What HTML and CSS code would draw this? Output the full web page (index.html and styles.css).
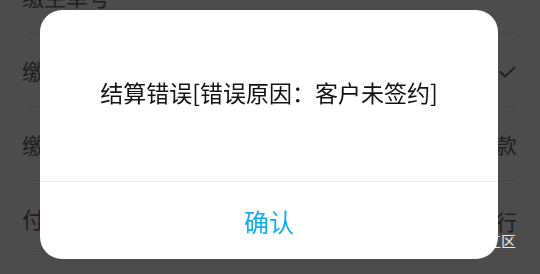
FILE: index.html
```html
<!DOCTYPE html>
<html lang="zh-CN">
<head>
<meta charset="utf-8">
<title>结算错误</title>
<link rel="stylesheet" href="styles.css">
</head>
<body>
<div class="page">
  <div class="list">
    <div class="row"><span class="label">缴主单号</span><span class="value"></span></div>
    <div class="row"><span class="label">缴费类型</span>
      <svg class="check" width="17" height="12" viewBox="0 0 17 12"><path d="M1 5.5 L6 10.5 L16 1" fill="none" stroke="#202020" stroke-width="1.8"/></svg>
    </div>
    <div class="row"><span class="label">缴款方式</span><span class="value">对公汇款</span></div>
    <div class="row"><span class="label">付款银行</span>
      <div class="value-col"><span class="value">中国银行</span><span class="sub">上海市松江区</span></div>
    </div>
    <div class="row"><span class="label"></span></div>
  </div>
</div>
<div class="overlay">
  <div class="dialog">
    <div class="message">结算错误[错误原因：客户未签约]</div>
    <div class="actions"><span class="confirm">确认</span></div>
  </div>
</div>
</body>
</html>
```
FILE: styles.css
```css
html, body {
  margin: 0;
  padding: 0;
  width: 540px;
  height: 274px;
  overflow: hidden;
  background: #4c4c4c;
  font-family: "Noto Sans CJK SC", "Noto Sans", sans-serif;
}
.page {
  height: 274px;
  overflow: hidden;
}
.list {
  margin-top: -41px;
}
.row {
  height: 73px;
  margin: 0 25px 0 27px;
  border-bottom: 1px solid #464646;
  display: flex;
  justify-content: space-between;
  align-items: center;
}
.label {
  margin-left: -5px;
  font-size: 22px;
  line-height: 22px;
  color: #1f1f1f;
}
.value {
  margin-right: -2px;
  font-size: 21px;
  line-height: 22px;
  color: #1f1f1f;
}
.check {
  margin-right: -1px;
  margin-top: 4px;
}
.value-col {
  align-self: flex-start;
  padding-top: 29px;
  display: flex;
  flex-direction: column;
  align-items: flex-end;
}
.sub {
  margin-right: -1px;
  font-size: 15px;
  line-height: 17px;
  color: #e8e8e8;
}
.overlay {
  position: fixed;
  inset: 0;
  padding: 10px 0 0 40px;
  display: flex;
  align-items: flex-start;
}
.dialog {
  width: 458px;
  height: 249px;
  background: #ffffff;
  border-radius: 22px;
  display: flex;
  flex-direction: column;
  overflow: hidden;
}
.message {
  height: 171px;
  display: flex;
  align-items: center;
  justify-content: center;
  padding-bottom: 8px;
  box-sizing: border-box;
  font-size: 23px;
  color: #111111;
  white-space: nowrap;
}
.actions {
  flex: 1;
  border-top: 1px solid #efefef;
  display: flex;
  align-items: center;
  justify-content: center;
}
.confirm {
  font-size: 25px;
  line-height: 28px;
  color: #12aef0;
}
```
